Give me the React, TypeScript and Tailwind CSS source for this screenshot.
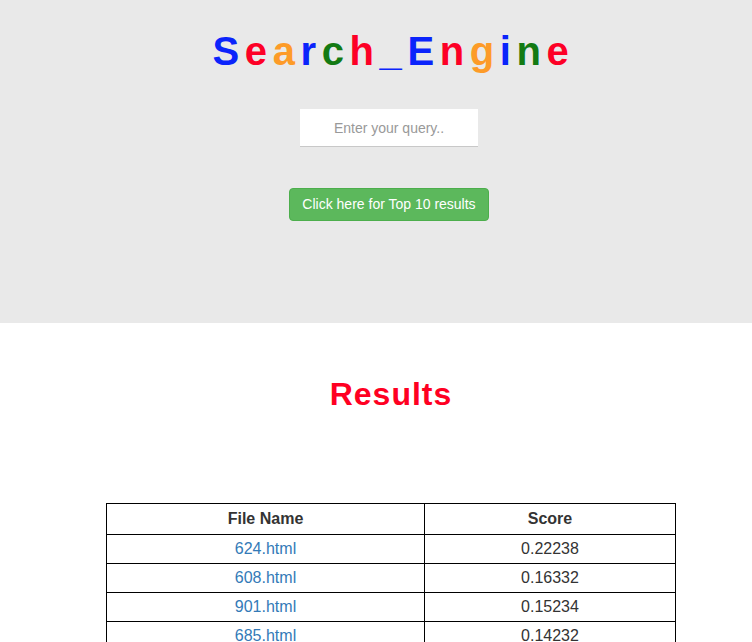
import React from "react";

const letters: { ch: string; c: string }[] = [
  { ch: "S", c: "text-[#0b24fb]" },
  { ch: "e", c: "text-[#fd0026]" },
  { ch: "a", c: "text-[#fd9b28]" },
  { ch: "r", c: "text-[#0b24fb]" },
  { ch: "c", c: "text-[#137a13]" },
  { ch: "h", c: "text-[#fd0026]" },
  { ch: "_", c: "text-[#0b24fb]" },
  { ch: "E", c: "text-[#0b24fb]" },
  { ch: "n", c: "text-[#fd0026]" },
  { ch: "g", c: "text-[#fd9b28]" },
  { ch: "i", c: "text-[#0b24fb]" },
  { ch: "n", c: "text-[#137a13]" },
  { ch: "e", c: "text-[#fd0026]" },
];

const rows = [
  ["624.html", "0.22238"],
  ["608.html", "0.16332"],
  ["901.html", "0.15234"],
  ["685.html", "0.14232"],
  ["712.html", "0.13120"],
];

export default function App() {
  return (
    <div className="min-h-screen bg-white text-[#333] font-['Liberation_Sans',Arial,sans-serif]">
      <div className="h-[323px] bg-[#e9e9e9] pl-[26px] flex flex-col items-center pt-[28px]">
        <h1 className="ml-[9px] text-[40px] leading-[46px] font-bold tracking-[5.6px] m-0">
          {letters.map((l, i) => (
            <span key={i} className={l.c}>
              {l.ch}
            </span>
          ))}
        </h1>
        <input
          type="text"
          placeholder="Enter your query.."
          className="mt-[35px] w-[178px] h-[38px] bg-white border-0 border-b border-[#c8c8c8] text-center text-[14px] outline-none placeholder:text-[#999]"
        />
        <button className="mt-[41px] w-[200px] h-[33px] bg-[#5cb85c] border border-[#4cae4c] rounded-[4px] text-white text-[14px]">
          Click here for Top 10 results
        </button>
      </div>
      <div className="pl-[30px] flex flex-col items-center">
        <h2 className="mt-[51px] text-[32px] leading-[40px] font-bold tracking-[1px] text-[#ff0022]">
          Results
        </h2>
        <table className="mt-[89px] w-[570px] border-collapse border border-black text-[16px]">
          <thead>
            <tr className="h-[31px]">
              <th className="w-[318px] border border-black font-bold text-center p-0">File Name</th>
              <th className="border border-black font-bold text-center p-0">Score</th>
            </tr>
          </thead>
          <tbody>
            {rows.map((r) => (
              <tr key={r[0]} className="h-[29px]">
                <td className="border border-black text-center p-0">
                  <a href="#" className="text-[#337ab7]">
                    {r[0]}
                  </a>
                </td>
                <td className="border border-black text-center p-0">{r[1]}</td>
              </tr>
            ))}
          </tbody>
        </table>
      </div>
    </div>
  );
}
